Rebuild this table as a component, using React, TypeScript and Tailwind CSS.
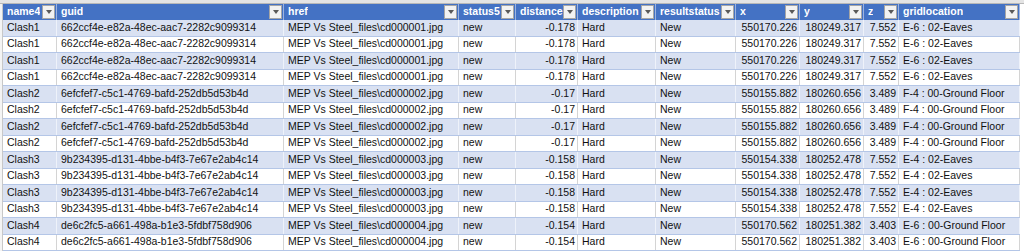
const COLS = [
  { key: "name4", label: "name4", w: "w-[54px]", align: "left" },
  { key: "guid", label: "guid", w: "w-[227px]", align: "left" },
  { key: "href", label: "href", w: "w-[175px]", align: "left" },
  { key: "status5", label: "status5", w: "w-[57px]", align: "left" },
  { key: "distance", label: "distance", w: "w-[62px]", align: "right" },
  { key: "description", label: "description", w: "w-[78px]", align: "left" },
  { key: "resultstatus", label: "resultstatus", w: "w-[80px]", align: "left" },
  { key: "x", label: "x", w: "w-[64px]", align: "right" },
  { key: "y", label: "y", w: "w-[64px]", align: "right" },
  { key: "z", label: "z", w: "w-[35px]", align: "right" },
  { key: "gridlocation", label: "gridlocation", w: "w-[121px]", align: "left" },
] as const;

type Row = Record<(typeof COLS)[number]["key"], string>;

const CLASHES = [
  {
    name4: "Clash1",
    guid: "662ccf4e-e82a-48ec-aac7-2282c9099314",
    href: "MEP Vs Steel_files\\cd000001.jpg",
    distance: "-0.178",
    x: "550170.226",
    y: "180249.317",
    z: "7.552",
    gridlocation: "E-6 : 02-Eaves",
    count: 4,
  },
  {
    name4: "Clash2",
    guid: "6efcfef7-c5c1-4769-bafd-252db5d53b4d",
    href: "MEP Vs Steel_files\\cd000002.jpg",
    distance: "-0.17",
    x: "550155.882",
    y: "180260.656",
    z: "3.489",
    gridlocation: "F-4 : 00-Ground Floor",
    count: 4,
  },
  {
    name4: "Clash3",
    guid: "9b234395-d131-4bbe-b4f3-7e67e2ab4c14",
    href: "MEP Vs Steel_files\\cd000003.jpg",
    distance: "-0.158",
    x: "550154.338",
    y: "180252.478",
    z: "7.552",
    gridlocation: "E-4 : 02-Eaves",
    count: 4,
  },
  {
    name4: "Clash4",
    guid: "de6c2fc5-a661-498a-b1e3-5fdbf758d906",
    href: "MEP Vs Steel_files\\cd000004.jpg",
    distance: "-0.154",
    x: "550170.562",
    y: "180251.382",
    z: "3.403",
    gridlocation: "E-6 : 00-Ground Floor",
    count: 2,
  },
];

const rows: Row[] = CLASHES.flatMap(({ count, ...c }) =>
  Array.from({ length: count }, () => ({
    ...c,
    status5: "new",
    description: "Hard",
    resultstatus: "New",
  })),
);

function FilterButton() {
  return (
    <span className="ml-auto mr-[1px] flex h-[14px] w-[13px] shrink-0 items-center justify-center border border-[#a6a6a6] bg-[#f2f2f2]">
      <span className="h-0 w-0 border-x-[3.5px] border-t-[4px] border-x-transparent border-t-[#595959]" />
    </span>
  );
}

export default function App() {
  return (
    <div
      className="h-[251px] w-[1024px] overflow-hidden bg-white text-[10.5px] text-[#111]"
      style={{ fontFamily: '"Liberation Sans", Arial, sans-serif' }}
    >
      <div className="h-[4px] border-b border-[#b8b8b8] bg-[#e4e4e4]" />
      <div className="flex">
        <div className="w-[3px] shrink-0 border-r border-[#c8c8c8] bg-[#f4f4f4]" />
        <div className="flex flex-col">
          <div className="flex h-[16px] bg-[#4472c4]">
            {COLS.map((col) => (
              <div
                key={col.key}
                className={`${col.w} flex shrink-0 items-center border-r border-[#9db4e0] pl-[4px] font-bold text-white`}
              >
                <span className="truncate">{col.label}</span>
                <FilterButton />
              </div>
            ))}
          </div>
          {rows.map((row, i) => {
            const banded = i % 2 === 0;
            return (
              <div
                key={i}
                className={`flex h-[16.5px] border-b ${
                  banded
                    ? "border-[#b4c6e7] bg-[#d9e1f2]"
                    : "border-[#b4c6e7] bg-white"
                }`}
              >
                {COLS.map((col) => (
                  <div
                    key={col.key}
                    className={`${col.w} flex shrink-0 items-center overflow-hidden whitespace-nowrap border-r ${
                      banded ? "border-[#eef2fa]" : "border-[#d4d4d4]"
                    } ${
                      col.align === "right"
                        ? "justify-end pr-[2px]"
                        : "pl-[4px]"
                    }`}
                  >
                    {row[col.key]}
                  </div>
                ))}
              </div>
            );
          })}
        </div>
      </div>
    </div>
  );
}
